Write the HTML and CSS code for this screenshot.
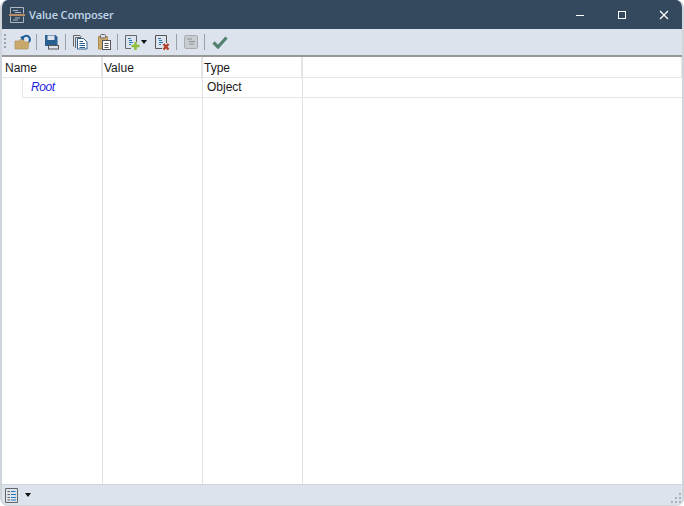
FILE: index.html
```html
<!DOCTYPE html>
<html lang="en">
<head>
<meta charset="utf-8">
<title>Value Composer</title>
<link rel="stylesheet" href="styles.css">
</head>
<body>
<div class="window">
  <header class="titlebar">
    <svg class="app-icon" width="18" height="18" viewBox="0 0 18 18" fill="none">
      <path d="M2.500 7.500V1.500H15.500V7.500M2.500 10.500V16.500H15.500V10.500" stroke="#aeb8c3"/>
      <path d="M1 9H17" stroke="#e8a468" stroke-width="1.500"/>
      <path d="M5 4.500H10M7 6.500H13M7 12H12M5 14H10" stroke="#aeb8c3"/>
    </svg>
    <span class="title">Value Composer</span>
    <div class="win-buttons">
      <svg width="10" height="10" viewBox="0 0 10 10"><path d="M1 5.500H9" stroke="#fff"/></svg>
      <svg width="10" height="10" viewBox="0 0 10 10" fill="none"><rect x="1.500" y="1.500" width="7" height="7" stroke="#fff"/></svg>
      <svg width="10" height="10" viewBox="0 0 10 10"><path d="M1 1L9 9M9 1L1 9" stroke="#fff" stroke-width="1.200"/></svg>
    </div>
  </header>

  <div class="toolbar">
    <span class="grip"></span>
    <svg width="18" height="18" viewBox="0 0 18 18" fill="none">
      <path d="M1 16V8H5L6 6.500H10V9H15L14 16Z" fill="#c9a86b" stroke="#a98b53" stroke-width=".6"/>
      <path d="M8 6.500C9 3 12.500 2 14.500 3.500C16 5 16 7.500 15 9" stroke="#1f5f99" stroke-width="2"/>
      <path d="M6 4L10.500 2.500L9.500 7.500Z" fill="#1f5f99"/>
    </svg>
    <span class="sep"></span>
    <svg width="17" height="18" viewBox="0 0 17 18" fill="none">
      <path d="M1 2H11.500L13.500 4V13H1Z" fill="#2a5f92"/>
      <rect x="3.500" y="2.500" width="7" height="4.500" fill="#dde3ed"/>
      <rect x="4.500" y="12.500" width="10" height="3.500" fill="#dde3ed" stroke="#555"/>
    </svg>
    <span class="sep"></span>
    <svg class="copy" width="17" height="18" viewBox="1 0 17 18" fill="none">
      <path d="M1.500 13.500V2.500H8L9.500 4M3.500 15V4.500H9" stroke="#666"/>
      <path d="M5.500 5.500H11.500L15 9V16H5.500Z" fill="#fff" stroke="#2a5f92"/>
      <path d="M7.500 8.500H11M7.500 10.500H13M7.500 12.500H13M7.500 14.500H13" stroke="#2a5f92"/>
    </svg>
    <svg class="paste" width="16" height="18" viewBox="0 0 16 18" fill="none">
      <path d="M1.500 3.500H10.500V16H1.500Z" fill="#c9a86b" stroke="#a98b53"/>
      <rect x="3.500" y="1.500" width="5" height="3.500" rx="1" fill="#dde3ed" stroke="#666"/>
      <rect x="5.500" y="7.500" width="8" height="9" fill="#fff" stroke="#555"/>
      <path d="M7.500 10.500H11.500M7.500 12.500H11.500M7.500 14.500H11.500" stroke="#555"/>
    </svg>
    <span class="sep"></span>
    <svg width="16" height="18" viewBox="1 0 16 18" fill="none">
      <path d="M12.500 9V2.500H1.500V15.500H7" stroke="#666"/>
      <path d="M4 5.500H7M5 7.500H8M5 9.500H9M5 11.500H7" stroke="#2a7ab8"/>
      <path d="M11.500 9V17M7.500 13H15.500" stroke="#8fbf3a" stroke-width="2.500"/>
    </svg>
    <svg class="caret" width="6" height="4" viewBox="0 0 6 4"><path d="M0 0H6L3 4Z" fill="#111"/></svg>
    <svg class="del" width="18" height="18" viewBox="0 0 18 18" fill="none">
      <path d="M12.500 10V2.500H1.500V15.500H8" stroke="#555"/>
      <path d="M4 5.500H7M5 7.500H8M5 9.500H9M5 11.500H7" stroke="#2a7ab8"/>
      <path d="M9.500 11L14.500 16.500M14.500 11L9.500 16.500" stroke="#b5402a" stroke-width="2.400"/>
    </svg>
    <span class="sep"></span>
    <svg width="16" height="16" viewBox="1 0 16 16" fill="none">
      <rect x="1.500" y="1.500" width="13" height="13" rx="1.500" fill="#c9cdd1" stroke="#a8acb0"/>
      <path d="M4 5H9M6 7.500H12M6 10H11" stroke="#8c9196"/>
    </svg>
    <span class="sep"></span>
    <svg width="16" height="14" viewBox="0 0 16 14" fill="none">
      <path d="M1.500 7.500L6 12L14.500 2.500" stroke="#54806f" stroke-width="3.200"/>
    </svg>
  </div>

  <main class="tree">
    <section class="col col-name">
      <div class="head head-name">Name</div>
      <div class="cell root">Root</div>
    </section>
    <section class="col">
      <div class="head">Value</div>
      <div class="cell"></div>
    </section>
    <section class="col">
      <div class="head">Type</div>
      <div class="cell type">Object</div>
    </section>
    <section class="col col-rest">
      <div class="head"></div>
      <div class="cell"></div>
    </section>
  </main>

  <footer class="statusbar">
    <svg width="13" height="15" viewBox="0 0 13 15" fill="none">
      <path d="M.5 .5H12.500V14.500H.5Z" stroke="#666"/>
      <path d="M2.500 3.500H5M2.500 6.500H5M2.500 9.500H5M2.500 12H5" stroke="#666"/>
      <path d="M6 3.500H10.500M6 6.500H11M6 9.500H11M6 12H11" stroke="#2a7ab8"/>
    </svg>
    <svg class="caret" width="6" height="4" viewBox="0 0 6 4"><path d="M0 0H6L3 4Z" fill="#111"/></svg>
    <svg class="resize" width="11" height="11" viewBox="0 0 11 11" fill="#a9b0ba">
      <rect x="8" y="0" width="2" height="2"/><rect x="4" y="4" width="2" height="2"/><rect x="8" y="4" width="2" height="2"/>
      <rect x="0" y="8" width="2" height="2"/><rect x="4" y="8" width="2" height="2"/><rect x="8" y="8" width="2" height="2"/>
    </svg>
  </footer>
</div>
</body>
</html>
```

FILE: styles.css
```css
* { box-sizing: border-box; }

html, body {
  margin: 0;
  height: 100%;
  background: #fff;
  overflow: hidden;
}

.window {
  width: 684px;
  height: 506px;
  display: flex;
  flex-direction: column;
  background: #dde3ed;
  border: 2px solid #d0d5dc;
  border-top: 0;
  border-bottom-width: 1px;
  border-radius: 8px;
  overflow: hidden;
  font-family: "Liberation Sans", Arial, sans-serif;
}

.titlebar {
  height: 29px;
  flex: none;
  margin: 0 -2px;
  padding-left: 8px;
  display: flex;
  align-items: center;
  background: #34495e;
}

.title {
  margin-left: 3px;
  font: 600 11px "Open Sans", sans-serif;
  letter-spacing: -0.15px;
  color: #c0d6ec;
}

.win-buttons {
  margin-left: auto;
  padding-right: 15px;
  display: flex;
  gap: 32px;
}

.toolbar {
  height: 28px;
  flex: none;
  display: flex;
  align-items: center;
  padding-left: 2px;
  background: #dde3ed;
  border-bottom: 2px solid;
  border-image: linear-gradient(#666, #999) 1;
}

.grip {
  width: 2px;
  height: 16px;
  margin-right: 8px;
  background: repeating-linear-gradient(#9aa1aa 0 2px, transparent 2px 4px);
}

.sep {
  width: 1px;
  height: 16px;
  margin: 0 7px 0 4px;
  background: #9b9fa6;
}

.paste { margin-left: 7px; }

.caret { flex: none; }

.del { margin-left: 7px; }

.tree {
  flex: 1;
  min-height: 0;
  display: flex;
  background: #fff;
  font-size: 12px;
  color: #1a1a1a;
}

.col {
  width: 100px;
  border-right: 1px solid #e2e2e2;
}

.col-name { width: 101px; }

.col-rest {
  flex: 1;
  border-right: 0;
}

.head {
  height: 21px;
  padding: 4px 0 0 1px;
  line-height: 15px;
  border-bottom: 1px solid #e6e6e6;
  box-shadow: inset -1px 0 0 #e6e6e6;
}

.head-name { padding-left: 3px; }

.cell {
  height: 20px;
  padding-left: 2px;
  line-height: 18px;
  border-bottom: 1px solid #e6e6e6;
}

.root {
  margin-left: 20px;
  padding-left: 8px;
  border-left: 1px solid #e6e6e6;
  font-style: italic;
  letter-spacing: -0.4px;
  color: #1a1ae0;
}

.type { padding-left: 4px; }

.statusbar {
  height: 21px;
  flex: none;
  display: flex;
  align-items: center;
  gap: 7px;
  padding-left: 3px;
  background: #dde3ed;
  border-top: 1px solid #cfd5de;
}

.resize {
  margin-left: auto;
  margin-top: 7px;
}
```
